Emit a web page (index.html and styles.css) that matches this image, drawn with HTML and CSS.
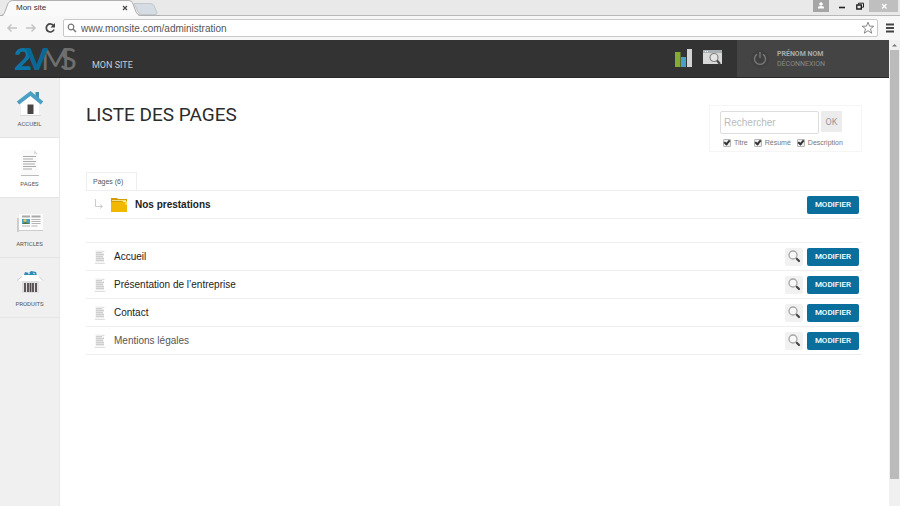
FILE: index.html
```html
<!DOCTYPE html>
<html lang="fr">
<head>
  <meta charset="UTF-8">
  <meta name="viewport" content="width=device-width, initial-scale=1.0">
  <title>Mon site</title>
  <link rel="stylesheet" href="styles.css">
</head>

<body>

  <!-- Symbols used by several rows -->
  <svg class="symbols" aria-hidden="true">
    <symbol id="doc" viewBox="0 0 12 16">
      <path d="M1 1h6l3 1v12H1z" fill="#f7f7f7"/>
      <path d="M2 3.500h6M2 5.500h8M2 7.500h7M2 9.500h8M2 11.500h8" stroke="#cfcfcf" stroke-width="1.700" fill="none"/>
      <path d="M8 2.500h2.500" stroke="#ddd"/>
      <path d="M1 14.500h10" stroke="#dedede"/>
    </symbol>
    <symbol id="loupe" viewBox="0 0 18 18">
      <circle cx="8" cy="7" r="4" fill="#f8f8f8" stroke="#a5a5a5" stroke-width="1.3"/>
      <path d="M10.8 9.8l1.2 1.2" stroke="#999" stroke-width="1.2"/>
      <path d="M12 11l2 2" stroke="#444" stroke-width="2.2" stroke-linecap="round"/>
    </symbol>
  </svg>

  <!-- Browser -->
  <div class="tabs">
    <svg class="tab-shape" width="160" height="17" viewBox="0 0 160 17">
      <path d="M134 3.500h16q3 0 4 2l3 7q.5 2-2 2h-13q-3 0-4-3z" fill="#d5dce3" stroke="#c3c8cd"/>
      <path d="M0 16.500c3 0 4-1 5-4l3-8Q9.500.500 12.500.500H129Q132 .500 133 4l3 8q1.500 4 5 4.500z" fill="#fafafa"/>
      <path d="M0 15.500c3 0 4-1 5-4l3-8Q9.500.500 12.500.500H129Q132 .500 133 4l3 8q1.500 3.500 5 3.500H160" fill="none" stroke="#b0b0b0"/>
    </svg>
    <span class="tab-title">Mon site</span>
    <button class="tab-close" type="button" aria-label="Fermer l'onglet">
      <svg width="6" height="6" viewBox="0 0 6 6"><path d="M1 1l4 4M5 1L1 5" stroke="#444" stroke-width="1.1"/></svg>
    </button>
    <div class="window-buttons">
      <button class="win user" type="button" aria-label="Utilisateur">
        <svg width="16" height="12" viewBox="0 0 16 12"><circle cx="8" cy="4" r="1.8" fill="#fff"/><path d="M5 8.500V7.500Q5 6 8 6t3 1.500v1z" fill="#fff"/></svg>
      </button>
      <button class="win" type="button" aria-label="Réduire">
        <svg width="16" height="12" viewBox="0 0 16 12"><path d="M5 7.500h6" stroke="#222" stroke-width="1.600"/></svg>
      </button>
      <button class="win" type="button" aria-label="Agrandir">
        <svg width="16" height="12" viewBox="0 0 16 12"><path d="M6.500 4.500V3.200h5v4H10" fill="none" stroke="#222"/><path d="M4.800 5h4.500v4H4.800z" fill="none" stroke="#222" stroke-width="1.400"/></svg>
      </button>
      <button class="win close" type="button" aria-label="Fermer">
        <svg width="16" height="12" viewBox="0 0 16 12"><path d="M6 4l4.500 4.500M10.500 4L6 8.500" stroke="#fff" stroke-width="1.300"/></svg>
      </button>
    </div>
  </div>

  <div class="toolbar">
    <button class="nav" type="button" aria-label="Précédent">
      <svg width="12" height="12" viewBox="0 0 12 12"><path d="M11 6H2M5.500 2.500L2 6l3.500 3.500" fill="none" stroke="#c4c4c4" stroke-width="1.500"/></svg>
    </button>
    <button class="nav" type="button" aria-label="Suivant">
      <svg width="12" height="12" viewBox="0 0 12 12"><path d="M1 6h9M6.500 2.500L10 6 6.500 9.500" fill="none" stroke="#c4c4c4" stroke-width="1.500"/></svg>
    </button>
    <button class="nav" type="button" aria-label="Actualiser">
      <svg width="12" height="12" viewBox="0 0 12 12"><path d="M9.600 3.700A4 4 0 1 0 10 7.500" fill="none" stroke="#444" stroke-width="1.700"/><path d="M11 1v4.500H6.500z" fill="#444"/></svg>
    </button>
    <div class="address">
      <svg width="10" height="10" viewBox="0 0 10 10"><circle cx="4" cy="4" r="2.800" fill="none" stroke="#777" stroke-width="1.200"/><path d="M6 6l3 3" stroke="#777" stroke-width="1.500"/></svg>
      <input class="url" type="text" aria-label="Adresse" value="www.monsite.com/administration">
      <svg width="14" height="14" viewBox="0 0 14 14"><path d="M7 1.200l1.600 4h4.200L9.500 7.900l1.200 4.300L7 9.700l-3.700 2.500 1.200-4.300L1.200 5.200h4.200z" fill="#fff" stroke="#888"/></svg>
    </div>
    <button class="nav menu" type="button" aria-label="Menu">
      <svg width="10" height="10" viewBox="0 0 10 10"><path d="M1 1.500h8M1 5h8M1 8.500h8" stroke="#444" stroke-width="1.900"/></svg>
    </button>
  </div>

  <div class="viewport">
    <div class="app">

      <!-- Header -->
      <header class="header">
        <svg class="logo" width="66" height="37" viewBox="0 0 66 37" role="img" aria-label="2VMS">
          <text class="logo-light" x="28" y="30">M</text>
          <text class="logo-light" x="47" y="30">S</text>
          <text class="logo-bold" x="1" y="30">2</text>
          <text class="logo-bold logo-v" x="13" y="30">V</text>
        </svg>
        <span class="site-name">MON SITE</span>
        <div class="tools">
          <a href="#" aria-label="Statistiques">
            <svg width="18" height="20" viewBox="0 0 18 20"><path d="M0 4h5.500v15H0z" fill="#86ab34"/><path d="M6 9h5v10H6z" fill="#47a0c6"/><path d="M12 1h5v18h-5z" fill="#d3d3d3"/></svg>
          </a>
          <a href="#" aria-label="Aperçu du site">
            <svg width="20" height="18" viewBox="0 0 20 18"><path d="M0 3h19v13H0z" fill="#d9d9d9"/><path d="M0 2h19v3H0z" fill="#a9b0b3"/><path d="M2 3.500h1M4 3.500h1" stroke="#fff"/><circle cx="11" cy="9.500" r="4" fill="#e5e5e5" stroke="#858585" stroke-width="1.200"/><path d="M14 12.500l3 3.500" stroke="#4a4a4a" stroke-width="2.200"/></svg>
          </a>
        </div>
        <div class="account">
          <svg width="20" height="20" viewBox="0 0 20 20"><circle cx="10" cy="10" r="9" fill="#404040"/><path d="M7 5.300a5.500 5.500 0 1 0 6 0M10 3v6" fill="none" stroke="#777" stroke-width="1.400"/></svg>
          <div class="account-text">
            <strong>PRÉNOM NOM</strong>
            <a href="#">DÉCONNEXION</a>
          </div>
        </div>
      </header>

      <div class="content">
        <!-- Sidebar -->
        <nav class="sidebar">
          <a class="side-item" href="#">
            <svg width="28" height="26" viewBox="0 0 28 26"><path d="M5 12L14 5l9 7v13H5z" fill="#fff"/><path d="M4 25.500h21" stroke="#d8d8d8"/><path d="M19.500 2h3.500v7h-3.500z" fill="#438fb0"/><path d="M2 13L14.500 3.500 26 13" fill="none" stroke="#4b9fc4" stroke-width="4"/><path d="M11.500 14.500h6V24h-6z" fill="#4a4444"/></svg>
            ACCUEIL
          </a>
          <a class="side-item active" href="#">
            <svg width="28" height="26" viewBox="0 0 28 26"><path d="M5 0h13l4 4v21H5z" fill="#fafafa"/><path d="M18 0v4h4" fill="#ddd"/><path d="M7 6.500h13M7 9h10M7 11.500h13M7 14h12M7 16.500h13M7 19h9" stroke="#aaa" stroke-width="1.200"/><path d="M5 25.500h18" stroke="#bbb"/></svg>
            PAGES
          </a>
          <a class="side-item" href="#">
            <svg width="28" height="26" viewBox="0 0 28 26"><path d="M2 8v14" stroke="#aaa"/><path d="M3 4h24v16H3z" fill="#fcfcfc"/><path d="M2 20.500h25" stroke="#ccc"/><path d="M6 6.500h8M15.500 6.500h9" stroke="#a8a8a8" stroke-width="2"/><path d="M6 9h8v5H6z" fill="#4ba1c4"/><path d="M6 14l3-2 5 2z" fill="#4c7837"/><circle cx="9" cy="10.500" r="1.500" fill="#e8c443"/><path d="M15.500 9.500h9M15.500 11.500h9M15.500 13.500h9M6 16h8M15.500 16h6" stroke="#b5b5b5"/></svg>
            ARTICLES
          </a>
          <a class="side-item" href="#">
            <svg width="28" height="26" viewBox="0 0 28 26"><path d="M8 5l1-3 4 1 2-2 5 1 1 4z" fill="#318bb2"/><path d="M12 4l2-1M17 3l2 1" stroke="#d4edf6"/><path d="M6 8h17v15H6z" fill="#e0e0e0"/><path d="M1 10l6-5h15l5 5-4 1H5z" fill="#fff"/><path d="M1 10.500l5-4M27 10.500l-4-4" stroke="#c9c9c9"/><path d="M9 13v9M12 13v9M14.500 13v9M17 13v9M20 13v9" stroke="#514949" stroke-width="1.800"/></svg>
            PRODUITS
          </a>
        </nav>

        <!-- Page list -->
        <main class="main">
          <div class="top">
            <h1>LISTE DES PAGES</h1>
            <form class="search">
              <div class="search-line">
                <input class="search-input" type="text" aria-label="Rechercher" placeholder="Rechercher">
                <button class="ok" type="button">OK</button>
              </div>
              <div class="filters">
                <label><input type="checkbox" checked>Titre</label>
                <label><input type="checkbox" checked>Résumé</label>
                <label><input type="checkbox" checked>Description</label>
              </div>
            </form>
          </div>

          <div class="list-tab">Pages (6)</div>
          <ul class="list">
            <li class="row folder">
              <svg width="10" height="12" viewBox="0 0 10 12"><path d="M1.500 0v7.500H8M6 5.500l2.500 2L6 9.500" fill="none" stroke="#ccc"/></svg>
              <svg width="16" height="14" viewBox="0 0 16 14"><path d="M0 0h6l1 1h9v13H0z" fill="#d49b00"/><path d="M1 2.500h14" stroke="#f7df88"/><path d="M0 4h10l2-1h4v11H0z" fill="#f2b800"/><path d="M12 3.500h3V7" fill="none" stroke="#fff0b5"/></svg>
              <strong class="name">Nos prestations</strong>
              <button class="edit" type="button">MODIFIER</button>
            </li>
          </ul>
          <ul class="list">
            <li class="row">
              <svg class="doc" width="12" height="16"><use href="#doc"/></svg>
              <span class="name">Accueil</span>
              <button class="view" type="button" aria-label="Voir"><svg width="18" height="18"><use href="#loupe"/></svg></button>
              <button class="edit" type="button">MODIFIER</button>
            </li>
            <li class="row">
              <svg class="doc" width="12" height="16"><use href="#doc"/></svg>
              <span class="name">Présentation de l’entreprise</span>
              <button class="view" type="button" aria-label="Voir"><svg width="18" height="18"><use href="#loupe"/></svg></button>
              <button class="edit" type="button">MODIFIER</button>
            </li>
            <li class="row">
              <svg class="doc" width="12" height="16"><use href="#doc"/></svg>
              <span class="name">Contact</span>
              <button class="view" type="button" aria-label="Voir"><svg width="18" height="18"><use href="#loupe"/></svg></button>
              <button class="edit" type="button">MODIFIER</button>
            </li>
            <li class="row">
              <svg class="doc" width="12" height="16"><use href="#doc"/></svg>
              <span class="name soft">Mentions légales</span>
              <button class="view" type="button" aria-label="Voir"><svg width="18" height="18"><use href="#loupe"/></svg></button>
              <button class="edit" type="button">MODIFIER</button>
            </li>
          </ul>
        </main>
      </div>
    </div>

    <!-- Scrollbar -->
    <div class="scrollbar">
      <svg width="9" height="10" viewBox="0 0 9 10"><path d="M2 6.500L4.500 4 7 6.500z" fill="#777"/></svg>
      <div class="thumb"></div>
    </div>
  </div>

</body>
</html>
```
FILE: styles.css
```css
* {
  box-sizing: border-box;
}

body {
  margin: 0;
  height: 100vh;
  display: flex;
  flex-direction: column;
  overflow: hidden;
  background: #fff;
  color: #222;
  font-family: "Liberation Sans", Arial, sans-serif;
  font-size: 10px;
}

button {
  padding: 0;
  border: 0;
  background: none;
  cursor: pointer;
}

button svg,
a svg {
  display: block;
}

a {
  color: inherit;
  text-decoration: none;
}

.symbols {
  position: absolute;
  width: 0;
  height: 0;
}

/* Browser */
.tabs {
  position: relative;
  display: flex;
  align-items: center;
  flex: none;
  height: 16px;
  padding-left: 16px;
  background: #e9e9e9;
  border-bottom: 1px solid #b8b8b8;
}

.tab-shape {
  position: absolute;
  left: 0;
  top: 0;
}

.tab-title {
  position: relative;
  width: 106px;
  font-size: 8px;
  line-height: 16px;
  color: #333;
}

.tab-close {
  position: relative;
}

.window-buttons {
  display: flex;
  align-self: flex-start;
  margin-left: auto;
  padding-right: 2px;
}

.win {
  display: flex;
  justify-content: center;
  width: 18px;
  height: 12px;
}

.win.user {
  width: 16px;
  margin-right: 4px;
  background: #a5a5a5;
}

.win.close {
  width: 29px;
  background: #bfbfbf;
}

.toolbar {
  display: flex;
  align-items: center;
  flex: none;
  gap: 7px;
  height: 24px;
  padding: 0 5px 0 6px;
  background: #f7f7f7;
}

.address {
  display: flex;
  align-items: center;
  flex: 1;
  height: 18px;
  padding: 0 2px 0 3px;
  background: #fff;
  border: 1px solid #c8c8c8;
  border-radius: 2px;
}

.url {
  flex: 1;
  margin-left: 4px;
  padding: 0;
  border: 0;
  outline: 0;
  font: 10px "Liberation Sans", Arial, sans-serif;
  color: #555;
}

/* Header */
.viewport {
  display: flex;
  flex: 1;
  min-height: 0;
}

.app {
  display: flex;
  flex-direction: column;
  flex: 1;
}

.header {
  display: flex;
  flex: none;
  height: 38px;
  background: #333;
  border-bottom: 1px solid #282828;
}

.logo {
  margin: 0 13px;
}

.logo-bold,
.logo-light {
  font-family: Lato, sans-serif;
  font-size: 31px;
}

.logo-bold {
  font-weight: 900;
  fill: #0b75a5;
}

.logo-v {
  fill: #0a6896;
}

.logo-light {
  font-weight: 400;
  fill: #6f6f6f;
}

.site-name {
  padding-top: 19px;
  font-family: Roboto, sans-serif;
  font-size: 9px;
  line-height: 13px;
  color: #ccc;
}

.tools {
  display: flex;
  gap: 10px;
  margin-left: auto;
  padding: 8px 14px 0 0;
}

.account {
  display: flex;
  align-items: center;
  gap: 7px;
  width: 152px;
  padding-left: 13px;
  background: #444;
}

.account-text {
  display: flex;
  flex-direction: column;
  font-family: Roboto, sans-serif;
  font-size: 7px;
  line-height: 10px;
  color: #888;
}

.account-text strong {
  color: #aaa;
}

/* Sidebar */
.content {
  display: flex;
  flex: 1;
}

.sidebar {
  width: 60px;
  background: #f0f0f0;
  border-right: 1px solid #e8e8e8;
}

.side-item {
  display: flex;
  flex-direction: column;
  align-items: center;
  gap: 4px;
  height: 60px;
  padding-top: 12px;
  border-bottom: 1px solid #e4e4e4;
  font-family: Roboto, sans-serif;
  font-size: 6px;
  line-height: 8px;
  color: #555;
}

.side-item.active {
  background: #fff;
}

/* Page list */
.main {
  flex: 1;
  padding: 27px 27px 0 26px;
}

.top {
  display: flex;
  justify-content: space-between;
  margin-bottom: 20px;
}

h1 {
  margin: 0;
  font-family: Roboto, sans-serif;
  font-size: 19px;
  font-weight: 400;
  line-height: 20px;
  color: #2c2c2c;
}

.search {
  width: 153px;
  height: 47px;
  padding: 5px 10px 0;
  border: 1px solid #f5f5f5;
}

.search-line {
  display: flex;
  gap: 2px;
}

.search-input {
  width: 99px;
  height: 23px;
  padding: 0 3px;
  border: 1px solid #ddd;
  border-radius: 2px;
  font: 10px "Liberation Sans", Arial, sans-serif;
}

.search-input::placeholder {
  color: #bbb;
}

.ok {
  width: 21px;
  height: 21px;
  background: #ececec;
  border-radius: 1px;
  font-family: Roboto, sans-serif;
  font-size: 9px;
  color: #999;
}

.filters {
  display: flex;
  gap: 6px;
  padding: 4px 0 0 3px;
}

.filters label {
  display: flex;
  align-items: center;
  gap: 3px;
  font-size: 7px;
  line-height: 9px;
  white-space: nowrap;
  color: #777;
}

.filters input {
  appearance: none;
  flex: none;
  width: 8px;
  height: 8px;
  margin: 0;
  border: 1px solid #b5b5b5;
  border-radius: 1px;
  background: #eee;
}

.filters input:checked::after {
  content: "";
  display: block;
  box-sizing: border-box;
  width: 4px;
  height: 6px;
  margin: -1px 0 0 1px;
  border: solid #333;
  border-width: 0 2px 2px 0;
  transform: rotate(40deg);
}

.list-tab {
  width: 51px;
  height: 18px;
  padding-left: 6px;
  border: 1px solid #eee;
  border-bottom: 0;
  font-size: 7px;
  line-height: 17px;
  color: #555;
}

.list {
  margin: 0 0 23px;
  padding: 0;
  border-top: 1px solid #eee;
  list-style: none;
}

.row {
  display: flex;
  align-items: center;
  height: 28px;
  padding: 0 3px 0 8px;
  border-bottom: 1px solid #eee;
}

.folder {
  gap: 7px;
}

.name {
  flex: 1;
  margin-left: 8px;
  color: #222;
}

.folder .name {
  margin-left: 1px;
}

.name.soft {
  color: #555;
}

.view {
  width: 18px;
  height: 18px;
  margin-right: 4px;
  background: #f1f1f1;
  border-radius: 2px;
}

.edit {
  width: 52px;
  height: 18px;
  background: #0a6f9c;
  border-radius: 2px;
  font-family: Roboto, sans-serif;
  font-size: 8px;
  font-weight: 500;
  color: #fff;
}

/* Scrollbar */
.scrollbar {
  display: flex;
  flex-direction: column;
  width: 11px;
  padding: 0 1px;
  background: #f0f0f0;
}

.scrollbar svg {
  flex: none;
}

.thumb {
  height: 92%;
  background: #bbb;
}
```
